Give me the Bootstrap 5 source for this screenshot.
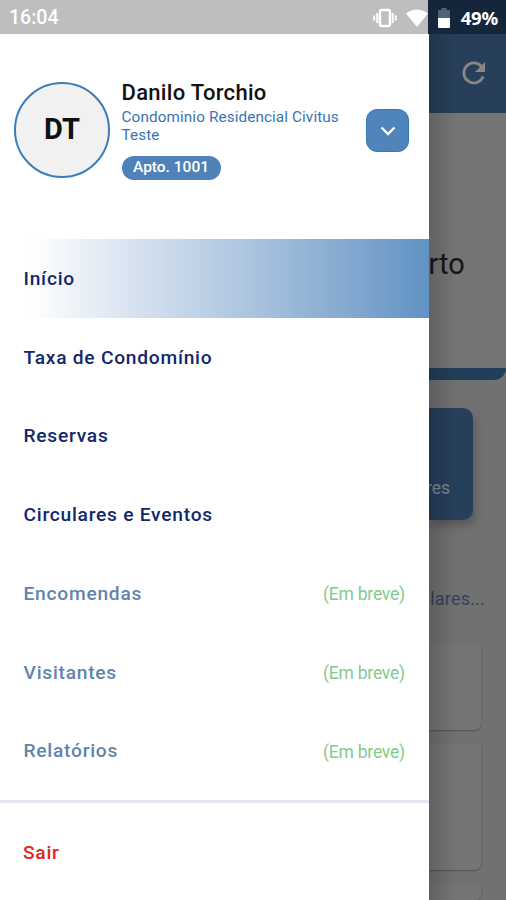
<!DOCTYPE html>
<html lang="pt-BR">
<head>
<meta charset="utf-8">
<meta name="viewport" content="width=device-width, initial-scale=1">
<title>Menu</title>
<link href="https://cdn.jsdelivr.net/npm/bootstrap@5.3.0/dist/css/bootstrap.min.css" rel="stylesheet">
<style>
body{font-family:Roboto,"Liberation Sans",sans-serif;background:#fff}
.screen{width:506px;height:900px}
.statusbar{height:34px;left:0;right:0;top:0;z-index:3;padding:2px 8px 0 9px;color:#fff;font-size:19.5px;line-height:32px;font-weight:500;
 background:linear-gradient(90deg,#bebebe 428.5px,#16263a 428.5px)}
.statusbar .clock{width:365px}
.statusbar .wifi{margin-left:8px}
.statusbar .battery{margin-left:9px}
.statusbar .pct{margin-left:11px;font-size:18.5px;font-weight:700;font-family:"Noto Sans",Roboto,sans-serif;letter-spacing:-.2px}
.drawer{width:428.5px;padding-top:34px;background:#fff}
.profile{height:205px;padding:48px 20px 0 14px}
.initials{width:96px;height:96px;border:2px solid #3a7db8;background:#f1f1f1;color:#111;font-size:29px;font-weight:700}
.who{margin-left:11.5px;width:236.5px}
.fullname{font-size:22px;line-height:26px;font-weight:500;color:#111;margin-top:-2px;letter-spacing:.3px}
.condo{font-size:15.3px;line-height:18px;color:#3b74b4;letter-spacing:.1px;margin-top:2px}
.unit{height:24px;width:99px;margin-top:12px;background:#4f82b8;font-size:15.5px;font-weight:500;letter-spacing:0;color:#fff;padding-bottom:0}
.toggle{width:43px;height:43px;border-radius:11px;margin:27px 0 0 8px;background:#4f85bb;border:1px solid #3279b6}
.entry{height:78.75px;padding:2px 23.5px 0 23.5px;font-size:19.2px;font-weight:500;letter-spacing:.75px;color:#14276a}
.entry.current{background:linear-gradient(90deg,#fff 30px,#e8eef6 90px,#abc4df 250px,#6293c4 428px)}
.entry.soon{color:#6284ab}
.entry .tag{font-size:17.5px;font-weight:400;letter-spacing:-.2px;color:#83cb8b}
.rule{height:3px;margin-top:10px;background:#e3e5f0}
.exit{height:98px;padding:3px 23px 0;font-size:19.2px;font-weight:500;letter-spacing:.75px;color:#e0251c}
.behind{width:77.5px;padding-top:34px;background:#717171}
.shade{left:428.5px;top:34px;width:28px;bottom:0;z-index:2;background:linear-gradient(90deg,rgba(0,0,0,.17),rgba(0,0,0,0))}
.topbar{height:79px;background:#273f5a;padding-right:20px;color:#8b8781}
.hero{height:267px;background:#757575;border-bottom:12px solid #213f5a;border-bottom-right-radius:12px;font-size:29px;color:#151515;padding-top:129px;line-height:44px}
.tile{width:44.5px;height:112px;margin-top:28px;border-radius:0 10px 10px 0;background:#263f5b;box-shadow:2px 6px 9px rgba(0,0,0,.22);font-size:17.5px;line-height:22px;color:#7d8791;padding:0 23px 21px 0}
.more{height:24px;margin-top:67px;padding-right:21px;font-size:18px;line-height:24px;color:#35415d;letter-spacing:.2px}
.panel{width:52px;background:#757575;border-radius:0 0 7px 0;box-shadow:0 1px 2px rgba(0,0,0,.28)}
.p-one{height:86px;margin-top:33px}.p-two{height:126px;margin-top:14px}.p-three{height:17px;margin-top:14px}
</style>
<script src="https://cdn.jsdelivr.net/npm/bootstrap@5.3.0/dist/js/bootstrap.bundle.min.js"></script>
</head>
<body>
<div class="screen position-relative d-flex overflow-hidden">
  <div class="statusbar position-absolute d-flex align-items-center">
    <span class="clock">16:04</span>
    <svg width="24" height="20" viewBox="0 0 24 20" fill="none" stroke="#fff" stroke-width="2"><rect x="7" y="2" width="10" height="16" rx="1.5" stroke-width="2.4"/><path d="M4.3 5v10M19.7 5v10M1.2 7.500v5M22.800 7.500v5"/></svg>
    <svg class="wifi" width="24" height="19" viewBox="0 0 24 19" fill="#fff"><path d="M1 4.500Q12-3.500 23 4.500L12 18Z"/></svg>
    <svg class="battery" width="12" height="20" viewBox="0 0 12 20"><path fill="#536270" d="M3.500 0h5v2H11q1 0 1 1v7H0V3q0-1 1-1h2.500Z"/><path fill="#fff" d="M0 10h12v9q0 1-1 1H1q-1 0-1-1Z"/></svg>
    <span class="pct">49%</span>
  </div>

  <nav class="drawer flex-shrink-0">
    <div class="profile d-flex align-items-start">
      <div class="initials rounded-circle d-flex align-items-center justify-content-center flex-shrink-0">DT</div>
      <div class="who flex-shrink-0">
        <div class="fullname">Danilo Torchio</div>
        <div class="condo">Condominio Residencial Civitus<br>Teste</div>
        <div class="unit rounded-pill d-flex align-items-center justify-content-center">Apto. 1001</div>
      </div>
      <button class="toggle btn p-0 d-flex align-items-center justify-content-center flex-shrink-0" aria-label="Trocar unidade">
        <svg width="16" height="10" viewBox="0 0 16 10" fill="none" stroke="#fff" stroke-width="2.300"><path d="M1.500 1.500 8 8l6.500-6.500"/></svg>
      </button>
    </div>
    <div class="entry current d-flex align-items-center">Início</div>
    <div class="entry d-flex align-items-center">Taxa de Condomínio</div>
    <div class="entry d-flex align-items-center">Reservas</div>
    <div class="entry d-flex align-items-center">Circulares e Eventos</div>
    <div class="entry soon d-flex align-items-center justify-content-between">Encomendas<span class="tag">(Em breve)</span></div>
    <div class="entry soon d-flex align-items-center justify-content-between">Visitantes<span class="tag">(Em breve)</span></div>
    <div class="entry soon d-flex align-items-center justify-content-between">Relatórios<span class="tag">(Em breve)</span></div>
    <div class="rule"></div>
    <div class="exit d-flex align-items-center">Sair</div>
  </nav>

  <main class="behind flex-shrink-0 overflow-hidden">
    <div class="topbar d-flex align-items-center justify-content-end">
      <svg width="25" height="25" viewBox="0 0 25 25"><path fill="none" stroke="currentColor" stroke-width="2.800" d="M20.300 5.200A10 10 0 1 0 22.200 15.500"/><path fill="currentColor" d="M24 1v10H14Z"/></svg>
    </div>
    <div class="hero">rto</div>
    <div class="tile d-flex align-items-end justify-content-end">res</div>
    <div class="more d-flex justify-content-end">ulares...</div>
    <div class="panel p-one"></div>
    <div class="panel p-two"></div>
    <div class="panel p-three"></div>
  </main>
  <div class="shade position-absolute"></div>
</div>
</body>
</html>
